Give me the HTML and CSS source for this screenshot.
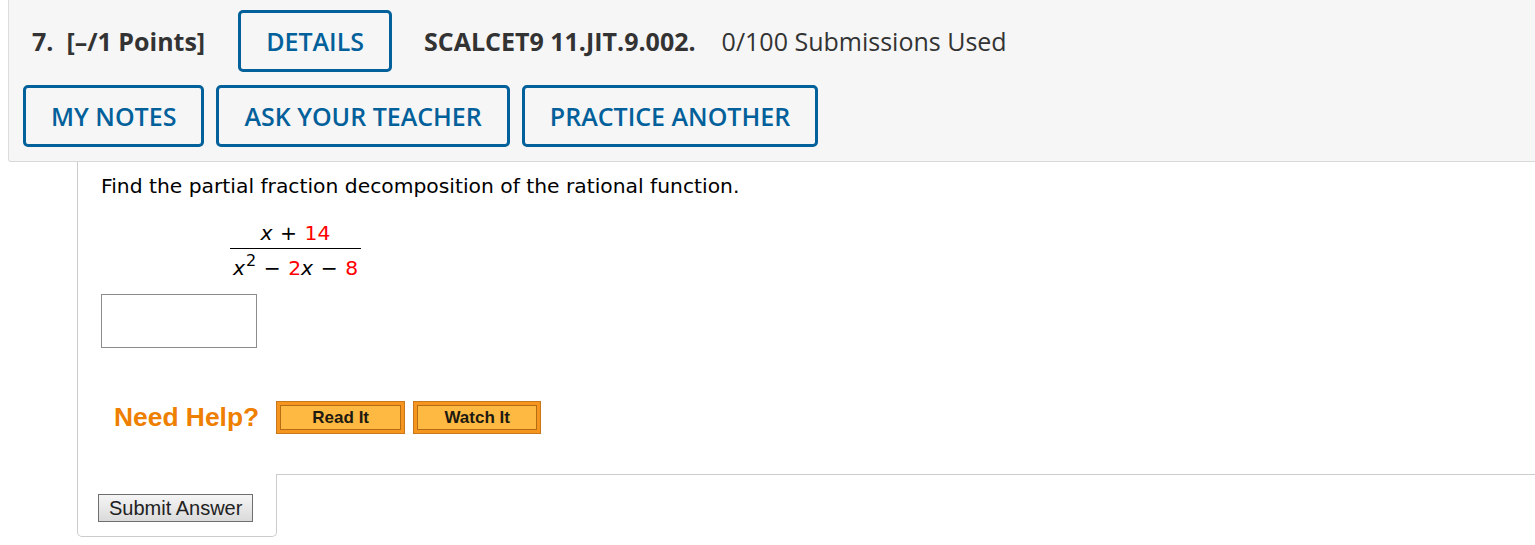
FILE: index.html
```html
<!DOCTYPE html>
<html lang="en">
<head>
<meta charset="utf-8">
<title>Question 7</title>
<link rel="stylesheet" href="styles.css">
</head>
<body>
<div class="page">
  <div class="qhead">
    <div class="row row-top">
      <span class="qnum">7.</span>
      <span class="qpoints">[–/1 Points]</span>
      <button class="hbtn btn-details" type="button">DETAILS</button>
      <span class="qcode">SCALCET9 11.JIT.9.002.</span>
      <span class="qsubs">0/100 Submissions Used</span>
    </div>
    <div class="row row-actions">
      <button class="hbtn" type="button">MY NOTES</button>
      <button class="hbtn" type="button">ASK YOUR TEACHER</button>
      <button class="hbtn" type="button">PRACTICE ANOTHER</button>
    </div>
  </div>

  <div class="qbody">
    <div class="qcontent">
      <p class="prompt">Find the partial fraction decomposition of the rational function.</p>
      <div class="frac">
        <div class="num"><i>x</i><span class="op">+</span><span class="red">14</span></div>
        <div class="den"><i>x</i><sup>2</sup><span class="op">−</span><span class="red">2</span><i>x</i><span class="op">−</span><span class="red">8</span></div>
      </div>
      <input class="answer" type="text" aria-label="answer">
      <div class="help">
        <span class="help-label">Need Help?</span>
        <button class="help-btn" type="button"><span>Read It</span></button>
        <button class="help-btn help-btn-watch" type="button"><span>Watch It</span></button>
      </div>
    </div>
    <div class="qfoot">
      <div class="submit-tab">
        <button class="submit" type="button">Submit Answer</button>
      </div>
      <div class="foot-fill"></div>
    </div>
  </div>
</div>
</body>
</html>
```

FILE: styles.css
```css
html, body {
  margin: 0;
  padding: 0;
  background: #ffffff;
}

.page {
  padding-left: 8px;
  overflow: hidden;
}

.qhead {
  background: #f6f6f6;
  border-left: 1px solid #dcdcdc;
  border-bottom: 1px solid #d8d8d8;
  border-bottom-left-radius: 3px;
  padding: 10px 14px 14px 14px;
  font-family: "Open Sans", "Liberation Sans", sans-serif;
  color: #333333;
}

.row {
  display: flex;
  align-items: center;
}

.row-actions {
  margin-top: 13px;
  gap: 12px;
}

.qnum {
  font-size: 25px;
  font-weight: 700;
  margin-left: 9px;
  margin-right: 13px;
}

.qpoints {
  font-size: 25px;
  font-weight: 700;
  margin-right: 33px;
}

.qcode {
  font-size: 25px;
  font-weight: 700;
  margin-left: 32px;
  margin-right: 26px;
}

.qsubs {
  font-size: 25px;
  font-weight: 400;
}

.hbtn {
  font-family: "Open Sans", "Liberation Sans", sans-serif;
  font-size: 25px;
  font-weight: 600;
  line-height: 34px;
  color: #02609a;
  background: transparent;
  border: 3px solid #02609a;
  border-radius: 5px;
  padding: 11px 25px;
  margin: 0;
  cursor: pointer;
}

.btn-details {
  padding-left: 25px;
  padding-right: 25px;
}

.qbody {
  margin-left: 69px;
}

.qcontent {
  border-left: 1px solid #cccccc;
  padding: 12px 0 40px 23px;
  font-family: "DejaVu Sans", Verdana, sans-serif;
  font-size: 20.3px;
  color: #000000;
}

.prompt {
  margin: 0;
  line-height: 24px;
}

.frac {
  display: inline-flex;
  flex-direction: column;
  align-items: center;
  margin: 23px 0 0 129px;
  line-height: 24px;
}

.num {
  padding: 0 3px 3px 3px;
  border-bottom: 1px solid #000000;
  align-self: stretch;
  text-align: center;
}

.den {
  padding: 7px 3px 0 3px;
}

.op {
  margin: 0 7.5px;
}

.frac i {
  font-style: italic;
}

.frac sup {
  font-size: 16px;
  line-height: 0;
  vertical-align: 9px;
  margin-left: 1px;
}

.red {
  color: #ff0000;
}

.answer {
  display: block;
  box-sizing: border-box;
  width: 156px;
  height: 54px;
  margin-top: 14px;
  border: 1px solid #8c8c8c;
  border-radius: 0;
  background: #ffffff;
  padding: 0 4px;
  font-size: 18px;
}

.help {
  display: flex;
  align-items: center;
  margin-top: 53px;
  padding-left: 13px;
  height: 33px;
}

.help-label {
  font-family: "Liberation Sans", Arial, sans-serif;
  font-weight: 700;
  font-size: 26.4px;
  color: #ee7f00;
  margin-right: 17px;
}

.help-btn {
  box-sizing: border-box;
  width: 129px;
  height: 33px;
  margin: 0 8px 0 0;
  padding: 3px;
  background: #f6951d;
  border: 1px solid #c9771c;
  display: flex;
  cursor: pointer;
}

.help-btn-watch {
  width: 128px;
}

.help-btn span {
  flex: 1;
  display: flex;
  align-items: center;
  justify-content: center;
  background: #fdb941;
  border: 1px solid #b46d14;
  font-family: "Liberation Sans", Arial, sans-serif;
  font-weight: 700;
  font-size: 17px;
  color: #1e1a12;
}

.qfoot {
  display: flex;
}

.submit-tab {
  box-sizing: border-box;
  width: 200px;
  border-left: 1px solid #cccccc;
  border-right: 1px solid #cccccc;
  border-bottom: 1px solid #cccccc;
  border-bottom-left-radius: 5px;
  border-bottom-right-radius: 5px;
  padding: 20px 0 14px 20px;
}

.foot-fill {
  flex: 1;
  border-top: 1px solid #cccccc;
}

.submit {
  box-sizing: border-box;
  height: 28px;
  margin: 0;
  padding: 0 10px;
  font-family: "Liberation Sans", Arial, sans-serif;
  font-size: 20px;
  line-height: 26px;
  color: #222222;
  background: linear-gradient(#f5f5f5, #dadada);
  border: 1px solid #6f6f6f;
  border-radius: 0;
  cursor: pointer;
}
```
